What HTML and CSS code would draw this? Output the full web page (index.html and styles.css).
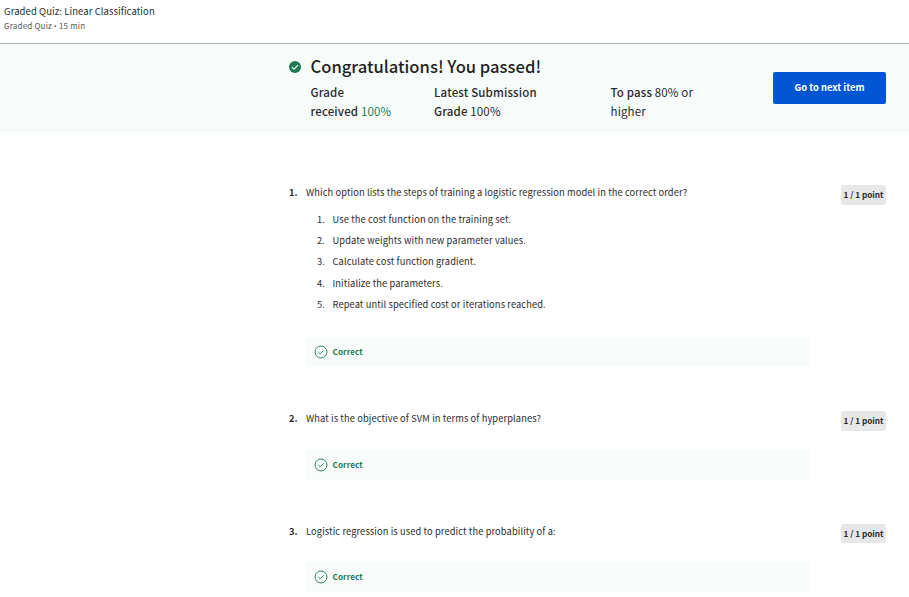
FILE: index.html
```html
<!DOCTYPE html>
<html lang="en">
<head>
<meta charset="utf-8">
<title>Graded Quiz: Linear Classification</title>
<link rel="stylesheet" href="styles.css">
</head>
<body>
<header class="top">
  <div class="top-title"><span>Graded Quiz: Linear Classification</span></div>
  <div class="top-meta">Graded Quiz <span class="dot">•</span> 15 min</div>
</header>
<section class="banner">
  <svg class="pass-icon" viewBox="0 0 12 12"><circle cx="6" cy="6" r="6" fill="#1d7c50"/><path d="M3 6.1l2 2 4-4" fill="none" stroke="#fff" stroke-width="1.2"/></svg>
  <div class="result">
    <h1><span>Congratulations! You passed!</span></h1>
    <div class="stats">
      <div class="stat"><b>Grade<br>received</b> <span class="green">100%</span></div>
      <div class="stat"><b>Latest Submission<br>Grade</b> 100%</div>
      <div class="stat"><b>To pass</b> 80% or<br>higher</div>
    </div>
  </div>
  <button class="next"><span>Go to next item</span></button>
</section>
<main>
  <article class="question first">
    <div class="num">1.</div>
    <div class="body">
      <p class="prompt">Which option lists the steps of training a logistic regression model in the correct order?</p>
      <ol class="steps">
        <li><i>1.</i><span>Use the cost function on the training set.</span></li>
        <li><i>2.</i><span>Update weights with new parameter values.</span></li>
        <li><i>3.</i><span>Calculate cost function gradient.</span></li>
        <li><i>4.</i><span>Initialize the parameters.</span></li>
        <li><i>5.</i><span>Repeat until specified cost or iterations reached.</span></li>
      </ol>
      <div class="feedback"><svg viewBox="0 0 14 14"><circle cx="7" cy="7" r="6"/><path d="M4.4 7.1l1.9 1.8 3.4-3.7"/></svg><span>Correct</span></div>
    </div>
    <div class="points"><span>1 / 1 point</span></div>
  </article>
  <article class="question second">
    <div class="num">2.</div>
    <div class="body">
      <p class="prompt">What is the objective of SVM in terms of hyperplanes?</p>
      <div class="feedback"><svg viewBox="0 0 14 14"><circle cx="7" cy="7" r="6"/><path d="M4.4 7.1l1.9 1.8 3.4-3.7"/></svg><span>Correct</span></div>
    </div>
    <div class="points"><span>1 / 1 point</span></div>
  </article>
  <article class="question third">
    <div class="num">3.</div>
    <div class="body">
      <p class="prompt">Logistic regression is used to predict the probability of a:</p>
      <div class="feedback"><svg viewBox="0 0 14 14"><circle cx="7" cy="7" r="6"/><path d="M4.4 7.1l1.9 1.8 3.4-3.7"/></svg><span>Correct</span></div>
    </div>
    <div class="points"><span>1 / 1 point</span></div>
  </article>
</main>
</body>
</html>
```
FILE: styles.css
```css
* { box-sizing: border-box; }
body {
  margin: 0;
  background: #fff;
  color: #2b2b2b;
  font-family: "Noto Sans CJK SC", "Open Sans", sans-serif;
  font-size: 9.3px;
  letter-spacing: .11px;
  overflow: hidden;
}
.top {
  height: 44px;
  padding: 4px 4px 0;
  border-bottom: 1px solid #b5b7b6;
  white-space: nowrap;
}
.top-title { height: 15px; line-height: 14px; font-size: 9.5px; font-weight: 400; letter-spacing: .08px; }
.top-meta { height: 14px; line-height: 14px; font-size: 8px; color: #555; letter-spacing: .2px; }
.dot { font-family: "Open Sans", sans-serif; font-size: 7px; line-height: 1; }
.banner {
  display: flex;
  height: 88px;
  padding-left: 289px;
  background: #f7fbfa;
}
.pass-icon { width: 12px; height: 12px; margin-top: 17px; flex: none; }
.result { width: 472px; padding: 7px 0 0 9.5px; flex: none; }
h1 {
  margin: 0;
  height: 32px;
  line-height: 31px;
  font-size: 16.6px;
  font-weight: 500;
  letter-spacing: 0;
  color: #1f1f1f;
}
.stats { display: flex; white-space: nowrap; font-size: 11.5px; line-height: 19px; letter-spacing: .15px; }
.stat b { font-weight: 500; }
.stat:nth-child(1) { width: 123.5px; }
.stat:nth-child(2) { width: 176.5px; }
.green { color: #1d7c50; }
.next {
  width: 113px;
  height: 32px;
  margin-top: 28px;
  padding: 0 0 2px;
  border: 0;
  border-radius: 2px;
  background: #0056d2;
  color: #fff;
  font: 700 9.4px/30px "Noto Sans CJK SC", sans-serif;
}
main { padding-left: 289px; }
.question { display: flex; }
.first { padding-top: 53px; height: 279px; }
.second { height: 113px; }
.third { height: 90px; }
.num { width: 17px; line-height: 15px; font-weight: 700; flex: none; }
.body { width: 504px; flex: none; white-space: nowrap; }
.prompt { margin: 0; height: 16px; line-height: 15px; }
.steps { margin: 7.5px 0 22.75px; padding: 0 0 0 11px; list-style: none; }
.steps li { display: flex; height: 21.35px; line-height: 21.35px; }
.steps i { width: 15.5px; font-style: normal; }
.feedback {
  display: flex;
  align-items: center;
  height: 29px;
  padding-left: 8px;
  background: #f7fbfa;
  color: #1d7c50;
  font-size: 8.1px;
  font-weight: 700;
}
.first .feedback span { padding-bottom: 1px; }
.second .feedback { margin-top: 23px; height: 30px; }
.third .feedback { margin-top: 22px; height: 30px; }
.second .feedback span, .third .feedback span { padding-bottom: 2px; }
.feedback svg { width: 14px; height: 14px; margin-right: 4.5px; fill: none; stroke: #1d7c50; stroke-width: .9; }
.points {
  width: 45px;
  height: 20px;
  margin: 0 0 0 31px;
  border-radius: 3px;
  background: #e5e7e8;
  text-align: center;
  line-height: 19.5px;
  font-size: 8.2px;
  font-weight: 700;
  letter-spacing: 0;
  white-space: nowrap;
}
.third .points { height: 19px; line-height: 18px; }
```
